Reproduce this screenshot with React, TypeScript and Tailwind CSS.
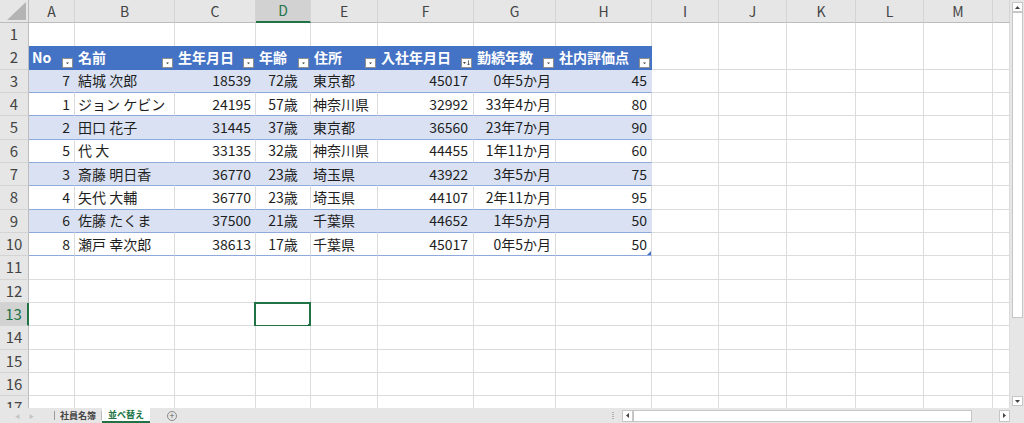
import React from "react";

const grid =
  "grid grid-cols-[29px_46px_100px_81px_55px_67px_96px_82px_96px_67px_68px_69px_68px_69px_17px]";

const letters = ["A", "B", "C", "D", "E", "F", "G", "H", "I", "J", "K", "L", "M", ""];

const headers = ["No", "名前", "生年月日", "年齢", "住所", "入社年月日", "勤続年数", "社内評価点"];

const rows: (string | number)[][] = [
  [7, "結城 次郎", 18539, "72歳", "東京都", 45017, "0年5か月", 45],
  [1, "ジョン ケビン", 24195, "57歳", "神奈川県", 32992, "33年4か月", 80],
  [2, "田口 花子", 31445, "37歳", "東京都", 36560, "23年7か月", 90],
  [5, "代 大", 33135, "32歳", "神奈川県", 44455, "1年11か月", 60],
  [3, "斎藤 明日香", 36770, "23歳", "埼玉県", 43922, "3年5か月", 75],
  [4, "矢代 大輔", 36770, "23歳", "埼玉県", 44107, "2年11か月", 95],
  [6, "佐藤 たくま", 37500, "21歳", "千葉県", 44652, "1年5か月", 50],
  [8, "瀬戸 幸次郎", 38613, "17歳", "千葉県", 45017, "0年5か月", 50],
];

// alignment per table column
const align = [
  "justify-end pr-1",
  "justify-start pl-[3px]",
  "justify-end pr-1",
  "justify-center",
  "justify-start pl-[2px]",
  "justify-end pr-[5px]",
  "justify-end pr-1",
  "justify-end pr-1",
];

function FilterBtn({ sorted }: { sorted?: boolean }) {
  return (
    <div className="absolute right-[1px] bottom-[1px] flex h-[10px] w-[11px] items-center justify-center border border-[#8f8f8f] bg-white">
      <svg width="9" height="6" viewBox="0 0 9 6">
        {sorted ? (
          <>
            <path d="M1 2 L4 2 L2.5 4 Z" fill="#444" />
            <path d="M6.5 0.5 V5 M5.3 3.8 L6.5 5 L7.7 3.8" stroke="#444" strokeWidth="0.8" fill="none" />
          </>
        ) : (
          <path d="M3 2.5 L6 2.5 L4.5 4.2 Z" fill="#444" />
        )}
      </svg>
    </div>
  );
}

function RowHead({ n, active }: { n: number; active?: boolean }) {
  return (
    <div
      className={
        active
          ? "flex items-center justify-center border-r-2 border-b border-r-[#217346] border-b-[#d4d4d4] bg-[#d2d2d2] text-[15px] text-[#217346]"
          : "flex items-center justify-center border-r border-b border-r-[#bcbcbc] border-b-[#d4d4d4] bg-[#e6e6e6] text-[15px] text-[#444]"
      }
    >
      {n}
    </div>
  );
}

function EmptyCells({ from, row }: { from: number; row: number }) {
  const cells = [];
  for (let c = from; c < 14; c++) {
    cells.push(
      <div key={c} className="relative border-r border-b border-[#dcdcdc] bg-white">
        {row === 13 && c === 3 && (
          <div className="absolute -top-[1px] -left-[2px] -right-[1px] -bottom-[2px] border-2 border-[#217346]">
            <div className="absolute -right-[3px] -bottom-[3px] h-[4px] w-[4px] bg-[#217346]" />
          </div>
        )}
      </div>
    );
  }
  return <>{cells}</>;
}

export default function App() {
  return (
    <div className="h-[423px] w-[1024px] overflow-hidden bg-[#e6e6e6] font-['Noto_Sans_CJK_JP',sans-serif] text-[14px] text-[#1e1e1e]">
      <div className="flex h-[408px]">
        <div className="w-[1010px] overflow-hidden bg-white">
          {/* column headers */}
          <div className={grid + " h-[23px]"}>
            <div className="flex items-end justify-end border-r border-b border-[#bcbcbc] bg-[#e6e6e6] pr-[2px] pb-[2px]">
              <svg width="19" height="18" viewBox="0 0 19 18">
                <path d="M19 0 L19 18 L0 18 Z" fill="#b4b4b4" />
              </svg>
            </div>
            {letters.map((l, i) => (
              <div
                key={i}
                className={
                  l === "D"
                    ? "flex items-center justify-center border-r border-b-2 border-r-[#d4d4d4] border-b-[#217346] bg-[#d2d2d2] text-[#217346]"
                    : "flex items-center justify-center border-r border-b border-r-[#d4d4d4] border-b-[#bcbcbc] bg-[#e6e6e6] text-[#444]"
                }
              >
                {l}
              </div>
            ))}
          </div>

          {/* row 1 */}
          <div className={grid + " h-[23.33px]"}>
            <RowHead n={1} />
            <EmptyCells from={0} row={1} />
          </div>

          {/* row 2: table header */}
          <div className={grid + " h-[23.33px]"}>
            <RowHead n={2} />
            {headers.map((h, i) => (
              <div
                key={i}
                className="relative flex items-center border-r border-b border-[#4472c4] bg-[#4472c4] pl-[3px] font-bold text-white"
              >
                {h}
                <FilterBtn sorted={i === 5} />
              </div>
            ))}
            <EmptyCells from={8} row={2} />
          </div>

          {/* data rows */}
          {rows.map((r, ri) => {
            const band = ri % 2 === 0;
            return (
              <div key={ri} className={grid + " h-[23.33px]"}>
                <RowHead n={ri + 3} />
                {r.map((v, ci) => (
                  <div
                    key={ci}
                    className={
                      "relative flex items-center whitespace-nowrap border-r border-b border-b-[#8ea9db] " +
                      (band ? "border-r-[#d9e1f2] bg-[#d9e1f2] " : "border-r-[#dcdcdc] bg-white ") +
                      align[ci]
                    }
                  >
                    {v}
                    {ri === 7 && ci === 7 && (
                      <svg className="absolute right-0 bottom-0" width="4" height="4" viewBox="0 0 4 4">
                        <path d="M4 0 L4 4 L0 4 Z" fill="#4472c4" />
                      </svg>
                    )}
                  </div>
                ))}
                <EmptyCells from={8} row={ri + 3} />
              </div>
            );
          })}

          {/* empty rows */}
          {[11, 12, 13, 14, 15, 16, 17].map((n) => (
            <div key={n} className={grid + " h-[23.33px]"}>
              <RowHead n={n} active={n === 13} />
              <EmptyCells from={0} row={n} />
            </div>
          ))}
        </div>

        {/* vertical scrollbar */}
        <div className="flex w-[14px] flex-col items-center bg-[#e6e6e6] pt-[2px] pb-[2px]">
          <div className="flex h-[10px] w-[11px] items-center justify-center border border-[#c6c6c6] bg-white">
            <svg width="5" height="3" viewBox="0 0 5 3">
              <path d="M0 3 L2.5 0 L5 3 Z" fill="#444" />
            </svg>
          </div>
          <div className="h-[306px] w-[11px] border border-[#c6c6c6] bg-white" />
          <div className="flex-1" />
          <div className="flex h-[10px] w-[11px] items-center justify-center border border-[#c6c6c6] bg-white">
            <svg width="5" height="3" viewBox="0 0 5 3">
              <path d="M0 0 L5 0 L2.5 3 Z" fill="#444" />
            </svg>
          </div>
        </div>
      </div>

      {/* sheet tabs + horizontal scrollbar */}
      <div className="flex h-[15px] items-center text-[9px]">
        <div className="flex w-[54px] items-center gap-[9px] pl-[15px] text-[5px] leading-none text-[#c4c4c4]">
          <span>◀</span>
          <span>▶</span>
        </div>
        <div className="h-[9px] w-px bg-[#9a9a9a]" />
        <div className="flex h-full items-center px-[5px] font-bold text-[#444]">社員名簿</div>
        <div className="h-[9px] w-px bg-[#bdbdbd]" />
        <div className="flex h-full items-center border-b-2 border-[#217346] bg-white px-[6px] font-bold text-[#217346]">
          並べ替え
        </div>
        <div className="ml-[17px] flex h-[10px] w-[10px] items-center justify-center rounded-full border border-[#8a8a8a] text-[9px] leading-none text-[#666]">
          +
        </div>
        <div className="flex-1" />
        <div className="mr-[8px] flex flex-col gap-[1px]">
          <div className="h-[1px] w-[2px] bg-[#b4b4b4]" />
          <div className="h-[1px] w-[2px] bg-[#b4b4b4]" />
          <div className="h-[1px] w-[2px] bg-[#b4b4b4]" />
          <div className="h-[1px] w-[2px] bg-[#b4b4b4]" />
        </div>
        <div className="flex h-[12px] w-[388px] items-center">
          <div className="flex h-[12px] w-[11px] items-center justify-center border border-[#c6c6c6] bg-white">
            <svg width="3" height="5" viewBox="0 0 3 5">
              <path d="M3 0 L3 5 L0 2.5 Z" fill="#444" />
            </svg>
          </div>
          <div className="h-[12px] w-[339px] border border-[#c6c6c6] bg-white" />
          <div className="flex-1" />
          <div className="flex h-[12px] w-[11px] items-center justify-center border border-[#c6c6c6] bg-white">
            <svg width="3" height="5" viewBox="0 0 3 5">
              <path d="M0 0 L3 2.5 L0 5 Z" fill="#444" />
            </svg>
          </div>
        </div>
        <div className="w-[14px]" />
      </div>
    </div>
  );
}
